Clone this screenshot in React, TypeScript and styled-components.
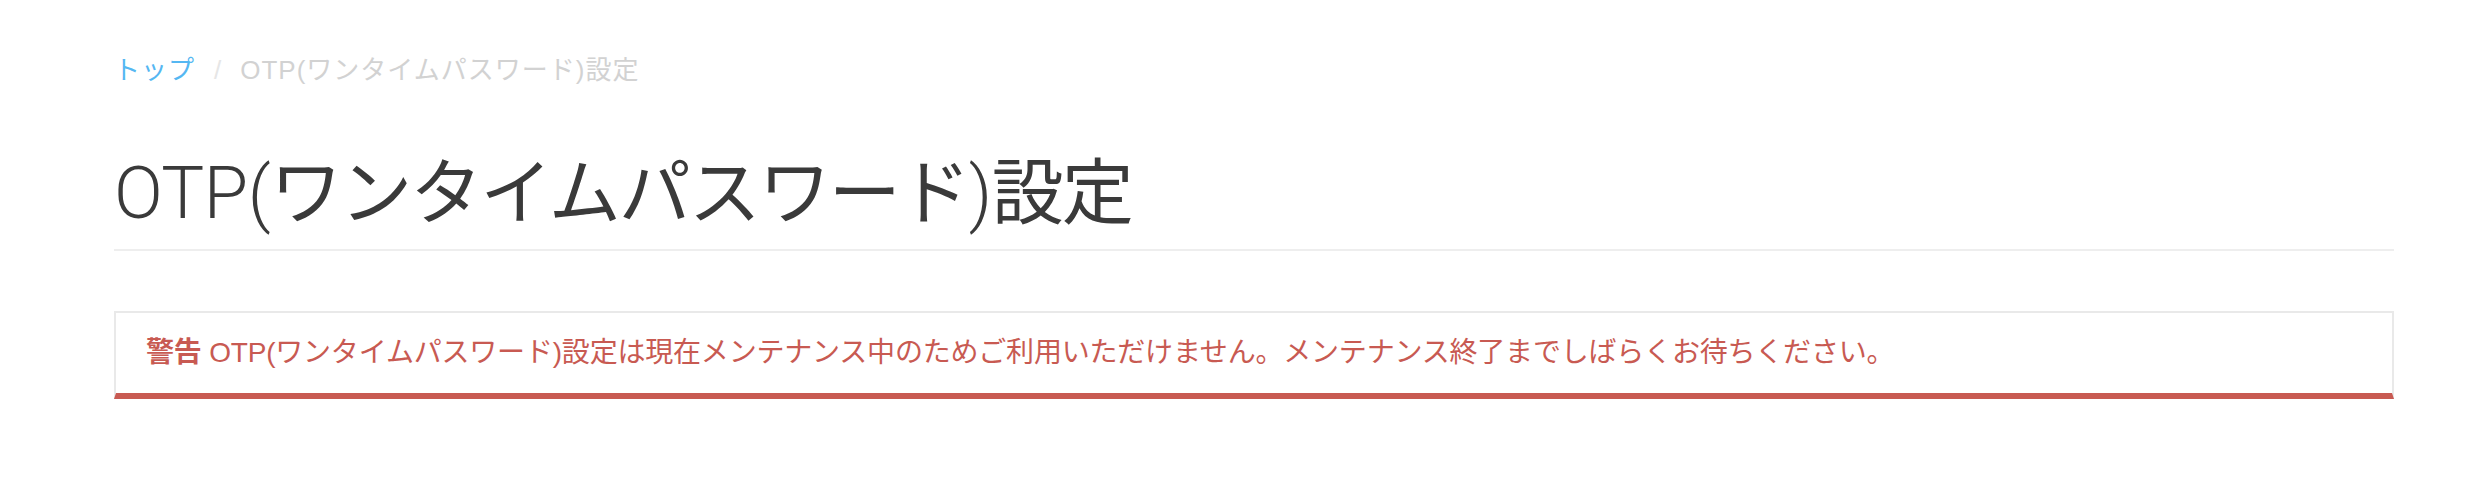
import { createGlobalStyle } from "styled-components";
import styled from "styled-components";

const GlobalStyle = createGlobalStyle`
  html, body {
    margin: 0;
    padding: 0;
    background: #ffffff;
  }
  body {
    font-family: "Liberation Sans", "Noto Sans CJK JP", sans-serif;
    color: #333333;
  }
`;

const Page = styled.main`
  width: 2280px;
  padding: 50px 0 0 114px;
`;

const Breadcrumb = styled.ol`
  display: flex;
  margin: 0;
  padding: 0;
  list-style: none;
  font-size: 26px;
  line-height: 40px;
  letter-spacing: 1px;
`;

const Crumb = styled.li<{ $active?: boolean }>`
  color: ${({ $active }) => ($active ? "#d2d2d2" : "#55b7f2")};

  &:not(:first-child)::before {
    content: "/";
    padding: 0 18px 0 19px;
    color: #e6e6e6;
  }
`;

const CrumbLink = styled.a`
  color: inherit;
  text-decoration: none;
`;

const Title = styled.h1`
  margin: 64px 0 0;
  padding-bottom: 16px;
  border-bottom: 2px solid #eeeeee;
  font-family: "Roboto", "Noto Sans CJK JP", sans-serif;
  font-weight: 400;
  font-size: 72px;
  line-height: 79px;
  letter-spacing: -2px;
  color: #3a3a3a;
`;

// the Latin part of the heading is set in a lighter cut
const Light = styled.span`
  font-weight: 300;
  letter-spacing: -0.5px;
`;

const Alert = styled.div<{ $tone: string }>`
  margin-top: 60px;
  padding: 20px 30px;
  border: 2px solid #e9e9e9;
  border-bottom: 6px solid ${({ $tone }) => $tone};
  font-size: 28px;
  line-height: 40px;
  letter-spacing: -0.2px;
  color: ${({ $tone }) => $tone};
`;

const AlertLabel = styled.strong`
  font-weight: 700;
`;

export default function App() {
  return (
    <>
      <GlobalStyle />
      <Page>
        <Breadcrumb>
          <Crumb>
            <CrumbLink href="#">トップ</CrumbLink>
          </Crumb>
          <Crumb $active>OTP(ワンタイムパスワード)設定</Crumb>
        </Breadcrumb>
        <Title>
          <Light>OTP(</Light>ワンタイムパスワード<Light>)</Light>設定
        </Title>
        <Alert $tone="#c85a52">
          <AlertLabel>警告</AlertLabel> OTP(ワンタイムパスワード)設定は現在メンテナンス中のためご利用いただけません。メンテナンス終了までしばらくお待ちください。
        </Alert>
      </Page>
    </>
  );
}
